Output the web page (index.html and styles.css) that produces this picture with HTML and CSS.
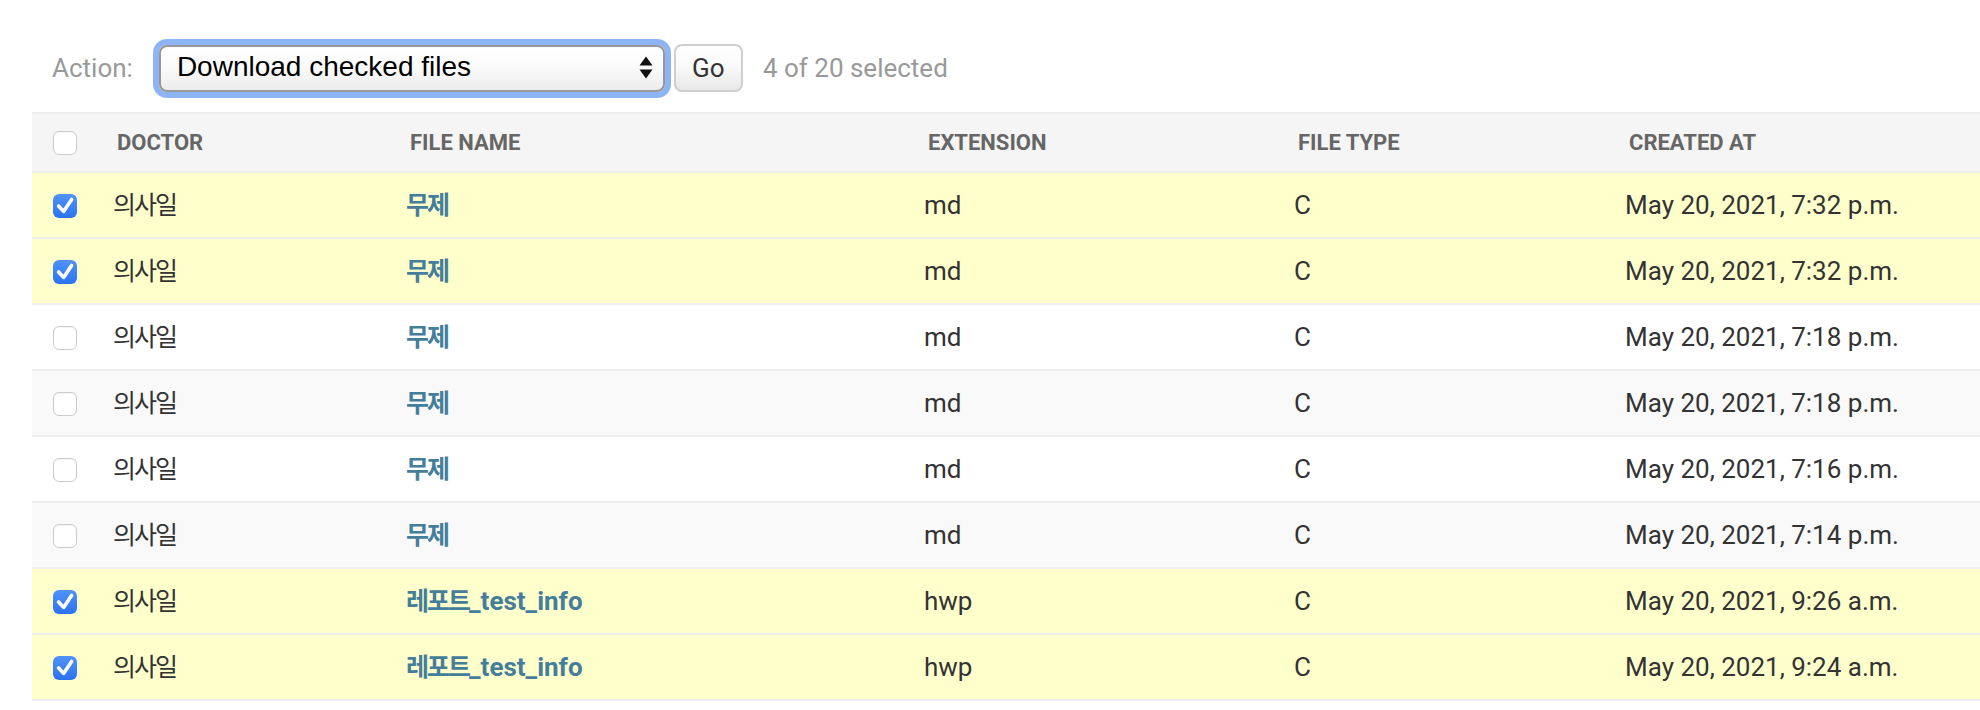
FILE: index.html
```html
<!DOCTYPE html>
<html lang="ko">
<head>
<meta charset="utf-8">
<title>Files | Django site admin</title>
<link rel="stylesheet" href="styles.css">
</head>
<body>
<div class="page">
  <div class="actions">
    <span class="label">Action:</span>
    <div class="select">
      <span class="select-text">Download checked files</span>
      <svg class="arrows" width="14" height="24" viewBox="0 0 14 24"><polygon points="0.5,9.5 13.5,9.5 7,0.5" fill="#111"/><polygon points="0.5,13.5 13.5,13.5 7,22.5" fill="#111"/></svg>
    </div>
    <button class="go">Go</button>
    <span class="counter">4 of 20 selected</span>
  </div>
  <table class="results">
    <colgroup>
      <col class="c-check"><col class="c-doctor"><col class="c-name"><col class="c-ext"><col class="c-type"><col class="c-created">
    </colgroup>
    <thead>
      <tr>
        <th class="check-col"><span class="cb"></span></th>
        <th><span class="text">Doctor</span></th>
        <th><span class="text">File name</span></th>
        <th><span class="text">Extension</span></th>
        <th><span class="text">File type</span></th>
        <th><span class="text">Created at</span></th>
      </tr>
    </thead>
    <tbody>
      <tr class="selected">
        <td class="check"><span class="cb on"><svg width="24" height="24" viewBox="0 0 24 24"><polyline points="5.6,12 10.6,17.4 18.6,5.4" fill="none" stroke="#fff" stroke-width="3.6" stroke-linecap="round" stroke-linejoin="round"/></svg></span></td>
        <td><span class="ko">의사일</span></td>
        <td class="name"><a href="#"><span class="ko">무제</span></a></td>
        <td>md</td><td>C</td><td>May 20, 2021, 7:32 p.m.</td>
      </tr>
      <tr class="selected">
        <td class="check"><span class="cb on"><svg width="24" height="24" viewBox="0 0 24 24"><polyline points="5.6,12 10.6,17.4 18.6,5.4" fill="none" stroke="#fff" stroke-width="3.6" stroke-linecap="round" stroke-linejoin="round"/></svg></span></td>
        <td><span class="ko">의사일</span></td>
        <td class="name"><a href="#"><span class="ko">무제</span></a></td>
        <td>md</td><td>C</td><td>May 20, 2021, 7:32 p.m.</td>
      </tr>
      <tr class="row1">
        <td class="check"><span class="cb"></span></td>
        <td><span class="ko">의사일</span></td>
        <td class="name"><a href="#"><span class="ko">무제</span></a></td>
        <td>md</td><td>C</td><td>May 20, 2021, 7:18 p.m.</td>
      </tr>
      <tr class="row2">
        <td class="check"><span class="cb"></span></td>
        <td><span class="ko">의사일</span></td>
        <td class="name"><a href="#"><span class="ko">무제</span></a></td>
        <td>md</td><td>C</td><td>May 20, 2021, 7:18 p.m.</td>
      </tr>
      <tr class="row1">
        <td class="check"><span class="cb"></span></td>
        <td><span class="ko">의사일</span></td>
        <td class="name"><a href="#"><span class="ko">무제</span></a></td>
        <td>md</td><td>C</td><td>May 20, 2021, 7:16 p.m.</td>
      </tr>
      <tr class="row2">
        <td class="check"><span class="cb"></span></td>
        <td><span class="ko">의사일</span></td>
        <td class="name"><a href="#"><span class="ko">무제</span></a></td>
        <td>md</td><td>C</td><td>May 20, 2021, 7:14 p.m.</td>
      </tr>
      <tr class="selected">
        <td class="check"><span class="cb on"><svg width="24" height="24" viewBox="0 0 24 24"><polyline points="5.6,12 10.6,17.4 18.6,5.4" fill="none" stroke="#fff" stroke-width="3.6" stroke-linecap="round" stroke-linejoin="round"/></svg></span></td>
        <td><span class="ko">의사일</span></td>
        <td class="name"><a href="#"><span class="ko">레포트</span>_test_info</a></td>
        <td>hwp</td><td>C</td><td>May 20, 2021, 9:26 a.m.</td>
      </tr>
      <tr class="selected">
        <td class="check"><span class="cb on"><svg width="24" height="24" viewBox="0 0 24 24"><polyline points="5.6,12 10.6,17.4 18.6,5.4" fill="none" stroke="#fff" stroke-width="3.6" stroke-linecap="round" stroke-linejoin="round"/></svg></span></td>
        <td><span class="ko">의사일</span></td>
        <td class="name"><a href="#"><span class="ko">레포트</span>_test_info</a></td>
        <td>hwp</td><td>C</td><td>May 20, 2021, 9:24 a.m.</td>
      </tr>
    </tbody>
  </table>
</div>
</body>
</html>
```

FILE: styles.css
```css
html, body {
  margin: 0;
  padding: 0;
  background: #fff;
  overflow: hidden;
}
body {
  font-family: Roboto, "Noto Sans CJK KR", "Liberation Sans", sans-serif;
  color: #333;
}
.page {
  padding-left: 32px;
}

/* ---------- actions bar ---------- */
.actions {
  height: 112px;
  box-sizing: border-box;
  padding: 44px 0 0 20px;
  display: flex;
  align-items: flex-start;
}
.label, .counter {
  font-size: 26px;
  line-height: 48px;
  color: #999;
}
.select {
  margin-left: 26px;
  margin-top: 1px;
  width: 506px;
  height: 47px;
  box-sizing: border-box;
  border: 2px solid #979797;
  border-radius: 8px;
  box-shadow: 0 0 0 6px #8db4f4;
  background: linear-gradient(#ffffff 0%, #fbfbfb 45%, #ececec 100%);
  display: flex;
  align-items: center;
  padding: 0 0 4px 16px;
}
.select-text {
  font-family: "Liberation Sans", Arial, sans-serif;
  font-size: 28px;
  color: #000;
  white-space: nowrap;
}
.arrows {
  margin-left: auto;
  margin-right: 10px;
  align-self: flex-start;
  margin-top: 9px;
}
.go {
  margin-left: 9px;
  width: 69px;
  height: 48px;
  box-sizing: border-box;
  border: 2px solid #cfcfcf;
  border-radius: 8px;
  background: linear-gradient(#ffffff 0%, #fafafa 45%, #e8e8e8 100%);
  font-family: Roboto, sans-serif;
  font-size: 26px;
  color: #333;
  padding: 0;
  line-height: 44px;
}
.counter {
  margin-left: 20px;
}

/* ---------- table ---------- */
.results {
  width: 1948px;
  table-layout: fixed;
  border-collapse: separate;
  border-spacing: 0;
}
.c-check { width: 65px; }
.c-doctor { width: 293px; }
.c-name { width: 518px; }
.c-ext { width: 370px; }
.c-type { width: 331px; }
.c-created { width: 371px; }

.results thead th {
  padding: 0;
  background: #f5f5f5;
  border-top: 2px solid #eeeeee;
  border-bottom: 2px solid #eeeeee;
  text-align: left;
  vertical-align: middle;
  font-size: 22px;
  font-weight: 700;
  color: #666;
  text-transform: uppercase;
  white-space: nowrap;
}
.results thead th .text {
  display: block;
  padding: 16px 20px;
  line-height: 25px;
}
.results thead th.check-col .cb {
  display: block;
  margin: 0 auto;
}

.results td {
  padding: 16px;
  height: 32px;
  font-size: 26px;
  line-height: 32px;
  color: #333;
  border-bottom: 2px solid #eeeeee;
  vertical-align: top;
  text-align: left;
  white-space: nowrap;
}
.results td.check {
  text-align: center;
}
.results td.check .cb {
  display: block;
  margin: 5px auto 0;
}
.results td.name a {
  color: #447e9b;
  font-weight: 700;
  text-decoration: none;
}
.ko {
  font-family: "Noto Sans CJK KR", sans-serif;
  font-size: 25px;
  line-height: 20px;
  letter-spacing: -2px;
}

tr.row1 { background: #ffffff; }
tr.row2 { background: #f9f9f9; }
tr.selected { background: #ffffcc; }

/* ---------- checkboxes ---------- */
.cb {
  width: 24px;
  height: 24px;
  box-sizing: border-box;
  border-radius: 6px;
  border: 1.5px solid #cbcbcb;
  background: #fff;
  box-shadow: inset 0 1px 1px rgba(0, 0, 0, 0.04);
}
.cb.on {
  border: none;
  background: linear-gradient(#4f93f9, #2b72f1);
  box-shadow: none;
}
.cb.on svg {
  display: block;
}
```
